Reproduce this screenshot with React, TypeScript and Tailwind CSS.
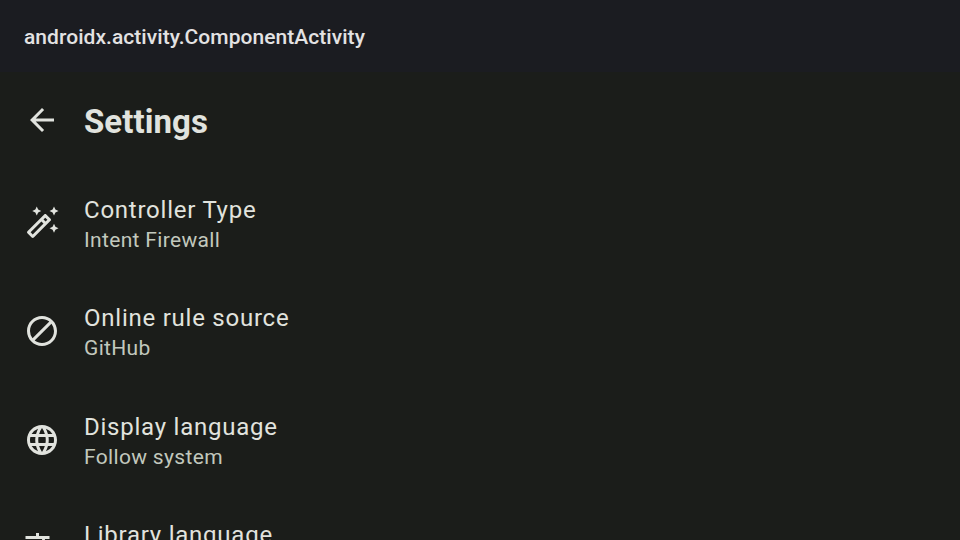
import React from "react";
import { MdArrowBack, MdOutlineAutoFixHigh, MdBlock, MdLanguage, MdTranslate } from "react-icons/md";

const items = [
  { title: "Controller Type", value: "Intent Firewall", Icon: MdOutlineAutoFixHigh },
  { title: "Online rule source", value: "GitHub", Icon: MdBlock },
  { title: "Display language", value: "Follow system", Icon: MdLanguage },
  { title: "Library language", value: "", Icon: MdTranslate },
];

export default function App() {
  return (
    <div className="h-[540px] w-[960px] overflow-hidden bg-[#1b1d1a] font-['Roboto',sans-serif] text-[#e1e3de]">
      <header className="flex h-[72px] items-center bg-[#1b1c21] px-6 pt-0.5 text-[21px] font-medium tracking-[0.05px] text-[#e3e2e3]">
        <span className="h-8 leading-8">androidx.activity.ComponentActivity</span>
      </header>
      <div className="flex h-24 items-center pl-6">
        <MdArrowBack className="size-9" />
        <h1 className="ml-6 pt-1 text-[33px] font-bold leading-10 tracking-[0.05px]">Settings</h1>
      </div>
      <main>
        {items.map(({ title, value, Icon }) => (
          <div key={title} className="flex h-[108.5px] items-start pl-6">
            <Icon className="mt-[36.5px] size-9 shrink-0" />
            <div className="ml-6 mt-[25.8px] whitespace-nowrap">
              <div className="text-[24px] leading-[32px] tracking-[0.76px]">{title}</div>
              {value && (
                <div className="text-[21px] leading-[28px] tracking-[0.33px] text-[#c2c8bd]">{value}</div>
              )}
            </div>
          </div>
        ))}
      </main>
    </div>
  );
}
